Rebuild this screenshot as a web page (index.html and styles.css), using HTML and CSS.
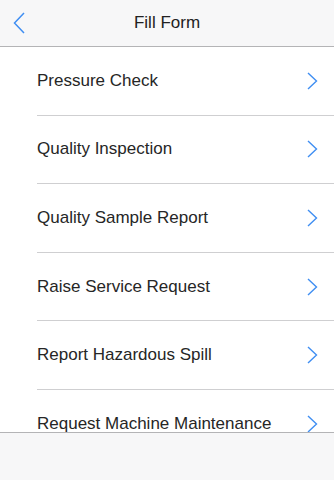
FILE: index.html
```html
<!DOCTYPE html>
<html lang="en">
<head>
    <meta charset="UTF-8">
    <meta name="viewport" content="width=device-width, initial-scale=1.0">
    <title>Fill Form</title>
    <link rel="stylesheet" href="styles.css">
</head>
<body>
    <div class="screen">
        <header class="nav-bar">
            <button class="back" aria-label="Back">
                <svg width="12" height="22" viewBox="0 0 12 22">
                    <path d="M11 1 L1.5 11 L11 21" fill="none" stroke="#3f8ef2" stroke-width="1.5"/>
                </svg>
            </button>
            <h1 class="title">Fill Form</h1>
        </header>

        <ul class="form-list">
            <li class="form-item"><span>Pressure Check</span><svg class="chevron" width="11" height="18" viewBox="0 0 11 18"><path d="M1 1 L9.5 9 L1 17" fill="none" stroke="#3f8ef2" stroke-width="1.4"/></svg></li>
            <li class="form-item"><span>Quality Inspection</span><svg class="chevron" width="11" height="18" viewBox="0 0 11 18"><path d="M1 1 L9.5 9 L1 17" fill="none" stroke="#3f8ef2" stroke-width="1.4"/></svg></li>
            <li class="form-item"><span>Quality Sample Report</span><svg class="chevron" width="11" height="18" viewBox="0 0 11 18"><path d="M1 1 L9.5 9 L1 17" fill="none" stroke="#3f8ef2" stroke-width="1.4"/></svg></li>
            <li class="form-item"><span>Raise Service Request</span><svg class="chevron" width="11" height="18" viewBox="0 0 11 18"><path d="M1 1 L9.5 9 L1 17" fill="none" stroke="#3f8ef2" stroke-width="1.4"/></svg></li>
            <li class="form-item"><span>Report Hazardous Spill</span><svg class="chevron" width="11" height="18" viewBox="0 0 11 18"><path d="M1 1 L9.5 9 L1 17" fill="none" stroke="#3f8ef2" stroke-width="1.4"/></svg></li>
            <li class="form-item"><span>Request Machine Maintenance</span><svg class="chevron" width="11" height="18" viewBox="0 0 11 18"><path d="M1 1 L9.5 9 L1 17" fill="none" stroke="#3f8ef2" stroke-width="1.4"/></svg></li>
        </ul>

        <footer class="tool-bar"></footer>
    </div>
</body>
</html>
```

FILE: styles.css
```css
* {
    box-sizing: border-box;
}
html, body {
    margin: 0;
    padding: 0;
}
body {
    font-family: 'Liberation Sans', Arial, sans-serif;
    color: #262626;
    background: #fff;
}
.screen {
    width: 334px;
    height: 480px;
    display: flex;
    flex-direction: column;
    overflow: hidden;
}
.nav-bar {
    flex: 0 0 47px;
    display: flex;
    align-items: center;
    justify-content: center;
    position: relative;
    background: #f7f7f8;
    border-bottom: 1px solid #b4b4b6;
}
.back {
    position: absolute;
    left: 13px;
    top: 12px;
    padding: 0;
    border: none;
    background: none;
    display: flex;
}
.title {
    margin: 0;
    font-size: 17px;
    font-weight: normal;
    color: #222;
}
.form-list {
    flex: 1;
    margin: 0;
    padding: 0 0 0 37px;
    list-style: none;
    overflow: hidden;
}
.form-item {
    height: 68.6px;
    display: flex;
    align-items: center;
    justify-content: space-between;
    padding-right: 16px;
    border-bottom: 1px solid #cfcfd1;
    font-size: 17px;
}
.tool-bar {
    flex: 0 0 48px;
    background: #f7f7f8;
    border-top: 1px solid #b4b4b6;
}
```
